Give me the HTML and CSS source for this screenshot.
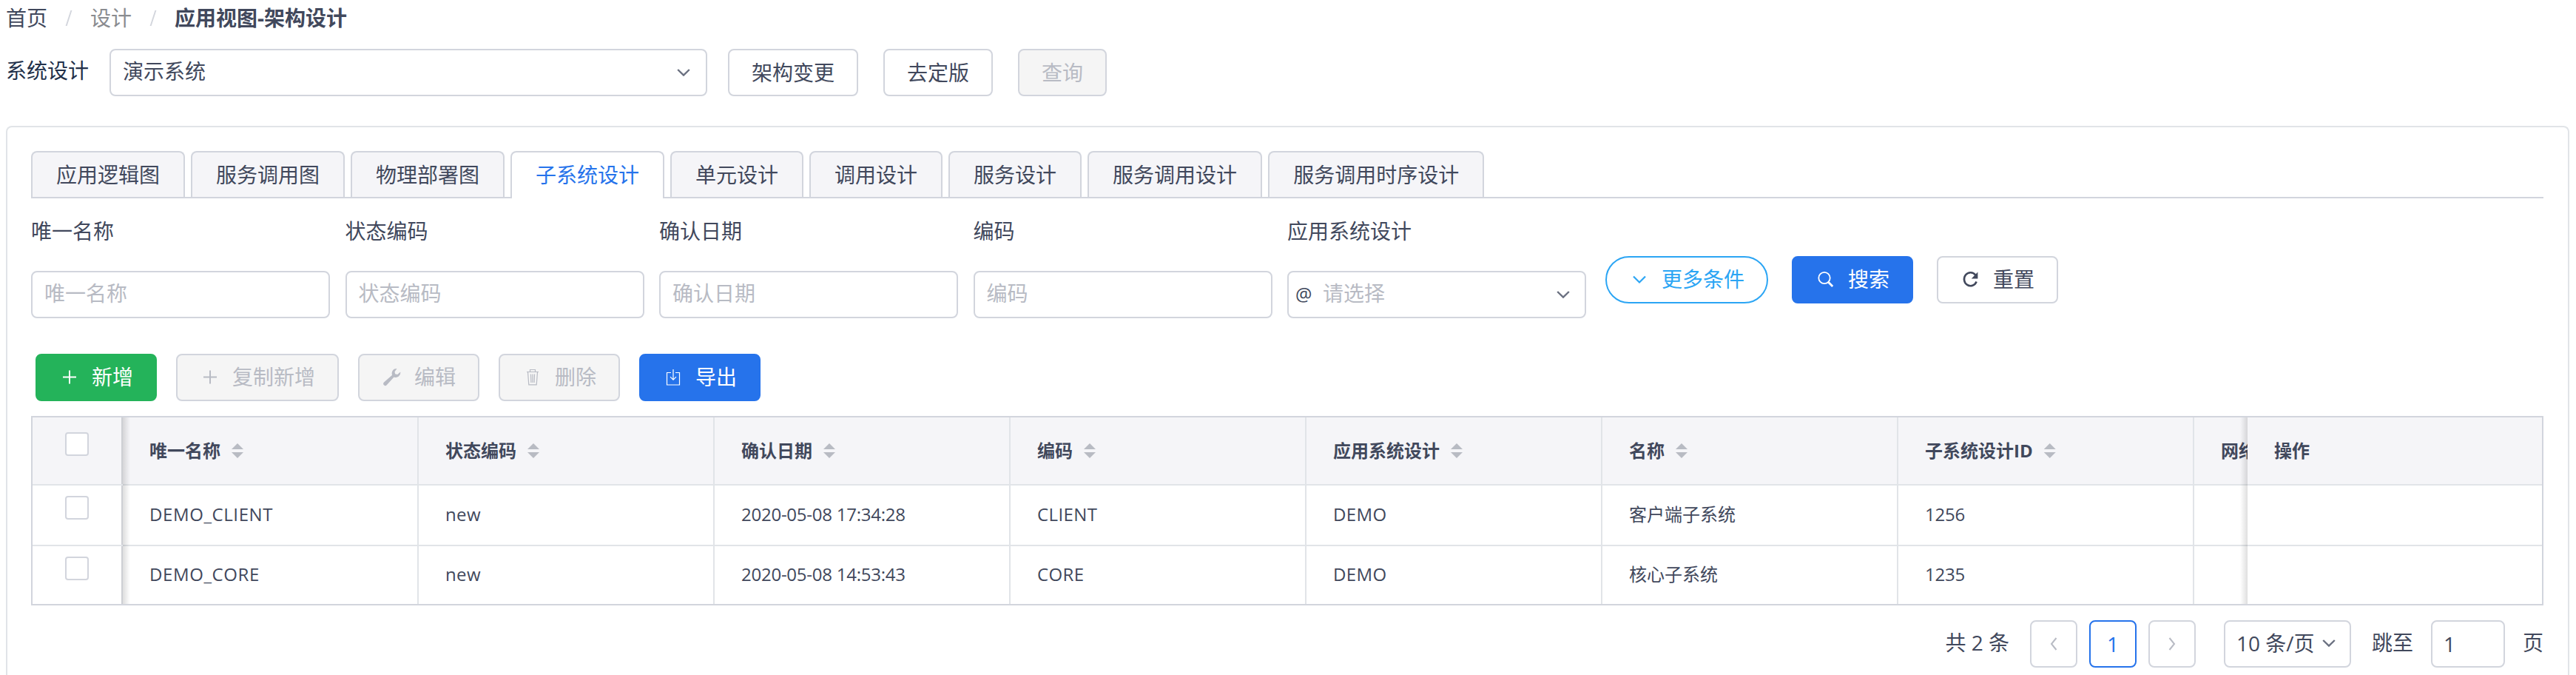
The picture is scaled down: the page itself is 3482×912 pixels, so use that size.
FILE: index.html
```html
<!DOCTYPE html>
<html lang="zh-CN">
<head>
<meta charset="utf-8">
<title>应用视图-架构设计</title>
<link rel="stylesheet" href="styles.css">
</head>
<body>
<nav class="breadcrumb"><a class="crumb">首页</a><i class="slash"></i><span class="crumb muted">设计</span><i class="slash"></i><b class="crumb">应用视图-架构设计</b></nav>

<div class="toolbar">
  <span class="toolbar-label">系统设计</span>
  <div class="field system-select"><span class="field-text">演示系统</span><svg class="chev" viewBox="0 0 18 10"><path d="M1.2 1 9 8.6 16.8 1"/></svg></div>
  <button class="btn">架构变更</button>
  <button class="btn">去定版</button>
  <button class="btn disabled">查询</button>
</div>

<main class="panel">
  <div class="tabs">
    <span class="tab">应用逻辑图</span><span class="tab">服务调用图</span><span class="tab">物理部署图</span><span class="tab active">子系统设计</span><span class="tab">单元设计</span><span class="tab">调用设计</span><span class="tab">服务设计</span><span class="tab">服务调用设计</span><span class="tab">服务调用时序设计</span>
  </div>

  <div class="search">
    <div class="filters">
      <label class="filter"><span class="filter-label">唯一名称</span><span class="field placeholder"><span class="field-text">唯一名称</span></span></label>
      <label class="filter"><span class="filter-label">状态编码</span><span class="field placeholder"><span class="field-text">状态编码</span></span></label>
      <label class="filter"><span class="filter-label">确认日期</span><span class="field placeholder"><span class="field-text">确认日期</span></span></label>
      <label class="filter"><span class="filter-label">编码</span><span class="field placeholder"><span class="field-text">编码</span></span></label>
      <label class="filter"><span class="filter-label">应用系统设计</span><span class="field placeholder with-at"><span class="at">@</span><span class="field-text">请选择</span><svg class="chev" viewBox="0 0 18 10"><path d="M1.2 1 9 8.6 16.8 1"/></svg></span></label>
    </div>
    <div class="search-actions">
      <button class="btn round"><svg class="icon" viewBox="0 0 28 28"><path d="M6 10.500l8 8 8-8" stroke-width="2.2"/></svg>更多条件</button>
      <button class="btn primary"><svg class="icon" viewBox="0 0 28 28"><circle cx="12" cy="12.500" r="7.7" stroke-width="1.8"/><path d="M17.2 18l6 6" stroke-width="2.8"/></svg>搜索</button>
      <button class="btn"><svg class="icon" viewBox="0 0 28 28"><path d="M20.3 8.600A8.600 9 0 1 0 21.600 17.500" stroke-width="2.600"/><path class="solid" d="M23.400 4.500v9H14.800z"/></svg>重置</button>
    </div>
  </div>

  <div class="row-actions">
    <button class="btn success"><svg class="icon" viewBox="0 0 28 28"><path d="M5 14.500h18M14 5.500v18" stroke-width="2"/></svg>新增</button>
    <button class="btn disabled"><svg class="icon" viewBox="0 0 28 28"><path d="M5 14.500h18M14 5.500v18" stroke-width="2"/></svg>复制新增</button>
    <button class="btn disabled"><svg class="icon" viewBox="0 0 28 28"><path class="solid" d="M20.500 3a6.400 6.400 0 0 0-6.400 8.700L3 21.600a2.600 2.600 0 0 0 3.700 3.700L16.500 14.500a6.400 6.400 0 0 0 8.700-7L21.200 11l-3.100-.8-.6-3z"/></svg>编辑</button>
    <button class="btn disabled"><svg class="icon" viewBox="0 0 28 28"><path d="M6 7.500h16M10.500 7.200V4.500h7v2.700M7.500 7.800l1.300 17h10.400l1.300-17M11.500 10.500l.4 11.500M14 10.500V22M16.500 10.500l-.4 11.500" stroke-width="1.200"/></svg>删除</button>
    <button class="btn primary"><svg class="icon" viewBox="0 0 28 28"><path d="M11 8.500H5.500v16.500h17V8.500H17M14 4v14M10 14.200l4 4 4-4" stroke-width="1.200"/></svg>导出</button>
  </div>

  <div class="table">
    <div class="tr head">
      <div class="td check"><i class="box"></i></div>
      <div class="td">唯一名称<i class="sort"></i></div><div class="td">状态编码<i class="sort"></i></div><div class="td">确认日期<i class="sort"></i></div><div class="td">编码<i class="sort"></i></div><div class="td">应用系统设计<i class="sort"></i></div><div class="td">名称<i class="sort"></i></div><div class="td">子系统设计ID<i class="sort"></i></div><div class="td cut">网络</div>
      <div class="td op">操作</div>
    </div>
    <div class="tr">
      <div class="td check"><i class="box"></i></div>
      <div class="td name">DEMO_CLIENT</div><div class="td code">new</div><div class="td num">2020-05-08 17:34:28</div><div class="td code">CLIENT</div><div class="td code">DEMO</div><div class="td">客户端子系统</div><div class="td num">1256</div><div class="td cut"></div>
      <div class="td op"></div>
    </div>
    <div class="tr last">
      <div class="td check"><i class="box"></i></div>
      <div class="td name">DEMO_CORE</div><div class="td code">new</div><div class="td num">2020-05-08 14:53:43</div><div class="td code">CORE</div><div class="td code">DEMO</div><div class="td">核心子系统</div><div class="td num">1235</div><div class="td cut"></div>
      <div class="td op"></div>
    </div>
  </div>

  <div class="pager">
    <span class="total">共 2 条</span>
    <span class="page"><svg class="arrow" viewBox="0 0 10 18"><path d="M8.500 1L2 9l6.500 8"/></svg></span>
    <span class="page current">1</span>
    <span class="page"><svg class="arrow" viewBox="0 0 10 18"><path d="M1.500 1L8 9l-6.500 8"/></svg></span>
    <span class="page size">10 条/页<svg class="chev" viewBox="0 0 18 10"><path d="M1.200 1 9 8.600 16.800 1"/></svg></span>
    <span class="jump">跳至</span>
    <span class="page goto">1</span>
    <span class="unit">页</span>
  </div>
</main>
</body>
</html>
```
FILE: styles.css
```css
* { box-sizing: border-box; }
body {
  margin: 0;
  width: 3482px;
  height: 912px;
  overflow: hidden;
  background: #fff;
  color: #41485c;
  font: 28px/40px "Open Sans", "Noto Sans CJK SC", sans-serif;
}
.breadcrumb { display: flex; align-items: center; height: 48px; padding-left: 8px; }
.muted { color: #8a8c90; }
.slash { width: 2px; height: 21px; margin: 0 28px; background: #d3d6dd; transform: skewX(-18deg); }

.toolbar { display: flex; align-items: center; height: 64px; margin-top: 18px; padding-left: 8px; }
.toolbar-label { width: 140px; color: #22304a; padding-bottom: 6px; }
.toolbar .btn { margin-left: 34px; padding: 0 30px; }
.toolbar .system-select + .btn { margin-left: 28px; }
.field {
  display: flex;
  align-items: center;
  height: 64px;
  padding: 0 16px;
  border: 2px solid #d2d5dd;
  border-radius: 8px;
  background: #fff;
}
.field-text { flex: 1; padding-bottom: 4px; }
.system-select { width: 808px; padding-right: 21px; }
.chev { width: 18px; height: 10px; fill: none; stroke: #6a7080; stroke-width: 2.4; }
.placeholder { color: #b8bbc4; }
.with-at { padding-left: 9px; padding-right: 20px; }
.at { width: 37px; color: #41485c; font-size: 25px; padding-bottom: 2px; }

.btn {
  display: inline-flex;
  align-items: center;
  flex: none;
  height: 64px;
  padding: 0 30px 2px;
  border: 2px solid #d2d5dd;
  border-radius: 8px;
  background: #fff;
  color: #41485c;
  font: inherit;
}
.btn.disabled { background: #f5f5f5; color: #b8bbc4; }
.btn.primary { background: #2673eb; border-color: #2673eb; color: #fff; }
.btn.success { background: #24b35a; border-color: #24b35a; color: #fff; }
.btn.round { border-color: #2ba5f4; border-radius: 32px; color: #2ba5f4; }
.icon { width: 28px; height: 28px; margin-right: 16px; fill: none; stroke: currentColor; }
.icon .solid { fill: currentColor; stroke: none; }

.panel {
  width: 3465px;
  height: 760px;
  margin: 40px 0 0 8px;
  padding: 32px 33px 0 32px;
  border: 2px solid #e1e4e8;
  border-bottom: 0;
  border-radius: 8px 8px 0 0;
}
.tabs { display: flex; gap: 8px; height: 64px; border-bottom: 2px solid #d2d5dd; }
.tab {
  height: 62px;
  padding: 10px 32px 0;
  border: 2px solid #d2d5dd;
  border-bottom: 0;
  border-radius: 8px 8px 0 0;
  background: #f5f5f8;
}
.tab.active { height: 64px; background: #fff; color: #2673eb; }

.search { display: flex; }
.filters { display: grid; grid-template-columns: repeat(5, 404px); gap: 20.5px; padding-top: 24px; }
.filter { display: flex; flex-direction: column; gap: 34px; }
.search-actions { display: flex; gap: 32px; padding: 78px 0 0 26px; }

.row-actions { display: flex; gap: 26px; padding: 48px 0 20px 6px; }

.table { width: 3396px; border: 2px solid #d2d5dd; font-size: 24px; }
.tr {
  display: grid;
  grid-template-columns: 122px repeat(7, 400px) 72px 398px;
  height: 82px;
  border-bottom: 2px solid #e1e4e8;
}
.tr.head { height: 92px; background: #f5f5f8; font-weight: 700; }
.tr.last { height: 78px; border-bottom: 0; }
.td { display: flex; align-items: center; padding: 0 0 3px 36px; border-right: 2px solid #e1e4e8; white-space: nowrap; }
.head .td { padding-bottom: 1px; }
.name { letter-spacing: .6px; }
.code { letter-spacing: .4px; }
.num { letter-spacing: -.25px; }
.td.check { position: relative; align-items: flex-start; padding: 14px 0 0 44px; border-color: #cdcfd4; }
.head .td.check { padding-top: 20px; }
.td.cut { border: 0; overflow: hidden; }
.td.op { position: relative; border: 0; }
/* edge shadows of the fixed columns */
.td.check::after, .td.op::before { content: ""; position: absolute; top: 0; bottom: -2px; width: 10px; }
.td.check::after { left: 100%; margin-left: 2px; background: linear-gradient(90deg, rgba(0, 0, 0, .13), transparent); }
.td.op::before { right: 100%; background: linear-gradient(270deg, rgba(0, 0, 0, .13), transparent); }
.last .td.check::after, .last .td.op::before { bottom: 0; }
.box { width: 32px; height: 32px; border: 2px solid #d2d5dd; border-radius: 4px; background: #fff; }
.sort { width: 16px; height: 20px; margin: 1px 0 0 15px; background: #b8bbc3; clip-path: polygon(50% 0, 100% 40%, 0 40%, 0 60%, 100% 60%, 50% 100%, 0 60%, 0 40%); }

.pager { display: flex; justify-content: flex-end; align-items: center; margin-top: 20px; }
.pager > span { padding-bottom: 4px; }
.pager > .page {
  display: flex;
  align-items: center;
  justify-content: center;
  width: 64px;
  height: 64px;
  margin-right: 16px;
  padding: 0;
  border: 2px solid #d2d5dd;
  border-radius: 8px;
}
.total { margin-right: 28px; }
.pager > .current { border-color: #2673eb; color: #2673eb; }
.arrow { width: 10px; height: 18px; fill: none; stroke: #b8bbc4; stroke-width: 2; }
.pager > .size { width: 172px; margin: 0 28px 0 22px; gap: 10px; justify-content: flex-start; padding: 0 0 2px 15px; }
.pager > .goto { width: 100px; margin: 0 24px; justify-content: flex-start; padding-left: 15px; }
```
